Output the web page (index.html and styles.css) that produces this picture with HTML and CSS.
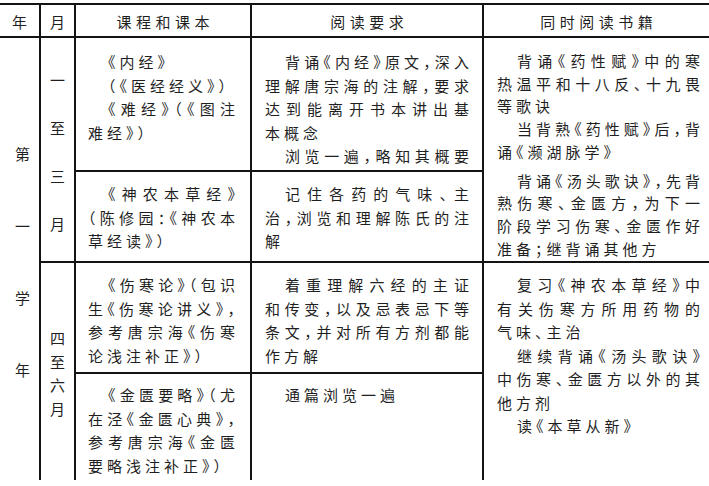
FILE: index.html
```html
<!DOCTYPE html>
<html lang="zh-CN">
<head>
<meta charset="utf-8">
<title>课程安排</title>
<link rel="stylesheet" href="styles.css">
</head>
<body>
<div class="sheet">
  <div class="cell hd">年</div>
  <div class="cell hd">月</div>
  <div class="cell hd">课程和课本</div>
  <div class="cell hd">阅读要求</div>
  <div class="cell hd">同时阅读书籍</div>

  <div class="cell year"><span>第</span><span>一</span><span>学</span><span>年</span></div>
  <div class="cell month m1"><span>一</span><span>至</span><span>三</span><span>月</span></div>
  <div class="cell txt first c3">
    <span class="ln ind end">《内经》</span>
    <span class="ln ind end">（《医经经义》）</span>
    <span class="ln ind">《难经》（《图注</span>
    <span class="ln end">难经》）</span>
  </div>
  <div class="cell txt first c4">
    <span class="ln ind">背诵《内经》原文，深入</span>
    <span class="ln">理解唐宗海的注解，要求</span>
    <span class="ln">达到能离开书本讲出基</span>
    <span class="ln end">本概念</span>
    <span class="ln ind">浏览一遍，略知其概要</span>
  </div>
  <div class="cell txt first c5 span2 dense">
    <span class="ln ind">背诵《药性赋》中的寒</span>
    <span class="ln">热温平和十八反、十九畏</span>
    <span class="ln end">等歌诀</span>
    <span class="ln ind">当背熟《药性赋》后，背</span>
    <span class="ln end">诵《濒湖脉学》</span>
    <span class="ln ind para">背诵《汤头歌诀》，先背</span>
    <span class="ln">熟伤寒、金匮方，为下一</span>
    <span class="ln">阶段学习伤寒、金匮作好</span>
    <span class="ln end">准备；继背诵其他方</span>
  </div>

  <div class="cell txt c3">
    <span class="ln ind">《神农本草经》</span>
    <span class="ln">（陈修园：《神农本</span>
    <span class="ln end">草经读》）</span>
  </div>
  <div class="cell txt c4">
    <span class="ln ind">记住各药的气味、主</span>
    <span class="ln">治，浏览和理解陈氏的注</span>
    <span class="ln end">解</span>
  </div>

  <div class="cell month m2"><span>四</span><span>至</span><span>六</span><span>月</span></div>
  <div class="cell txt c3">
    <span class="ln ind">《伤寒论》（包识</span>
    <span class="ln">生《伤寒论讲义》，</span>
    <span class="ln">参考唐宗海《伤寒</span>
    <span class="ln end">论浅注补正》）</span>
  </div>
  <div class="cell txt c4">
    <span class="ln ind">着重理解六经的主证</span>
    <span class="ln">和传变，以及忌表忌下等</span>
    <span class="ln">条文，并对所有方剂都能</span>
    <span class="ln end">作方解</span>
  </div>
  <div class="cell txt c5 span2">
    <span class="ln ind">复习《神农本草经》中</span>
    <span class="ln">有关伤寒方所用药物的</span>
    <span class="ln end">气味、主治</span>
    <span class="ln ind">继续背诵《汤头歌诀》</span>
    <span class="ln">中伤寒、金匮方以外的其</span>
    <span class="ln end">他方剂</span>
    <span class="ln ind end">读《本草从新》</span>
  </div>

  <div class="cell txt c3 lastrow">
    <span class="ln ind">《金匮要略》（尤</span>
    <span class="ln">在泾《金匮心典》，</span>
    <span class="ln">参考唐宗海《金匮</span>
    <span class="ln end">要略浅注补正》）</span>
  </div>
  <div class="cell txt c4 lastrow">
    <span class="ln ind end">通篇浏览一遍</span>
  </div>
</div>
</body>
</html>
```

FILE: styles.css
```css
html, body {
  margin: 0;
  padding: 0;
  background: #ffffff;
}

body {
  font-family: "Noto Sans CJK SC", "Noto Sans", sans-serif;
  font-size: 15px;
  color: #1f1f1f;
  font-feature-settings: "halt" 1;
  text-spacing-trim: space-all;
}

.sheet {
  width: 709px;
  margin-top: 3px;
  padding-top: 2px;
  display: grid;
  grid-template-columns: 39px 33px 174px 230px 225px;
  grid-template-rows: 31px 132px 89px 109px 106px;
  gap: 2px;
  background: #141414;
}

.cell {
  background: #ffffff;
  line-height: 23.5px;
  min-width: 0;
}

.hd {
  display: flex;
  align-items: center;
  justify-content: center;
  padding-top: 3px;
  letter-spacing: 4.5px;
  text-indent: 4.5px;
}

.year {
  grid-row: span 4;
  display: flex;
  flex-direction: column;
  align-items: center;
  justify-content: center;
  gap: 50px;
  line-height: 22px;
  padding-top: 6px;
  padding-left: 6px;
}

.month {
  grid-row: span 2;
  display: flex;
  flex-direction: column;
  align-items: center;
  justify-content: center;
}

.m1 {
  gap: 26px;
  line-height: 22px;
  padding-top: 4px;
}

.m2 {
  gap: 0;
  line-height: 23.5px;
  padding-top: 3px;
}

.span2 {
  grid-row: span 2;
}

.txt {
  padding-top: 10px;
  letter-spacing: 4px;
}

.txt.first {
  padding-top: 12px;
}

.txt.dense {
  line-height: 22.7px;
}

.txt.lastrow {
  padding-top: 9px;
}

.c3 {
  padding-left: 12px;
  padding-right: 11px;
}

.c4 {
  padding-left: 13px;
  padding-right: 9px;
}

.c5 {
  padding-left: 13px;
  padding-right: 5px;
}

.ln {
  display: block;
  white-space: nowrap;
  text-align: justify;
  text-align-last: justify;
}

.ln.end {
  text-align: left;
  text-align-last: left;
}

.ln.ind {
  text-indent: 20px;
}

.ln.para {
  margin-top: 6px;
}
```
